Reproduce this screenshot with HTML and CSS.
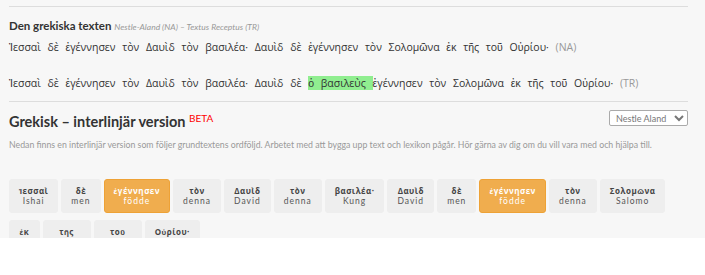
FILE: index.html
```html
<!DOCTYPE html>
<html lang="sv">
<head>
  <meta charset="UTF-8">
  <title>Grekiska texten</title>
  <link rel="stylesheet" href="styles.css">
</head>
<body>
  <div class="page">
    <hr class="sep first">

    <div class="greek-block">
      <h4 class="block-title">Den grekiska texten <small>Nestle-Aland (NA) – Textus Receptus (TR)</small></h4>
      <p class="greek-line">Ἰεσσαὶ δὲ ἐγέννησεν τὸν Δαυὶδ τὸν βασιλέα· Δαυὶδ δὲ ἐγέννησεν τὸν Σολομῶνα ἐκ τῆς τοῦ Οὐρίου· <span class="src">(NA)</span></p>
      <p class="greek-line">Ἰεσσαὶ δὲ ἐγέννησεν τὸν Δαυὶδ τὸν βασιλέα· Δαυὶδ δὲ <mark class="diff">ὁ βασιλεὺς </mark>ἐγέννησεν τὸν Σολομῶνα ἐκ τῆς τοῦ Οὐρίου· <span class="src">(TR)</span></p>
    </div>

    <hr class="sep">

    <div class="inter-head">
      <h2 class="inter-title">Grekisk – interlinjär version <sup class="beta">BETA</sup></h2>
      <select class="text-select">
        <option>Nestle Aland</option>
        <option>Textus Receptus</option>
      </select>
    </div>
    <p class="inter-desc">Nedan finns en interlinjär version som följer grundtextens ordföljd. Arbetet med att bygga upp text och lexikon pågår. Hör gärna av dig om du vill vara med och hjälpa till.</p>

    <div class="words">
      <div class="word"><span class="gr">Ἰεσσαὶ</span><span class="sv">Ishai</span></div>
      <div class="word"><span class="gr">δὲ</span><span class="sv">men</span></div>
      <div class="word active"><span class="gr">ἐγέννησεν</span><span class="sv">födde</span></div>
      <div class="word"><span class="gr">τὸν</span><span class="sv">denna</span></div>
      <div class="word"><span class="gr">Δαυὶδ</span><span class="sv">David</span></div>
      <div class="word"><span class="gr">τὸν</span><span class="sv">denna</span></div>
      <div class="word"><span class="gr">βασιλέα·</span><span class="sv">Kung</span></div>
      <div class="word"><span class="gr">Δαυὶδ</span><span class="sv">David</span></div>
      <div class="word"><span class="gr">δὲ</span><span class="sv">men</span></div>
      <div class="word active"><span class="gr">ἐγέννησεν</span><span class="sv">födde</span></div>
      <div class="word"><span class="gr">τὸν</span><span class="sv">denna</span></div>
      <div class="word"><span class="gr">Σολομῶνα</span><span class="sv">Salomo</span></div>
      <div class="word"><span class="gr">ἐκ</span><span class="sv">av</span></div>
      <div class="word"><span class="gr">τῆς</span><span class="sv">denna</span></div>
      <div class="word"><span class="gr">τοῦ</span><span class="sv">denne</span></div>
      <div class="word"><span class="gr">Οὐρίου·</span><span class="sv">Urias</span></div>
    </div>
  </div>
</body>
</html>
```

FILE: styles.css
```css
body {
  margin: 0;
  background: #fff;
  font-family: Lato, "Open Sans", sans-serif;
  color: #333;
}
.page {
  background: #f7f7f7;
  height: 238px;
  overflow: hidden;
  padding: 0 17px 0 9px;
}
.sep {
  border: 0;
  border-top: 1px solid #ddd;
  margin: 0;
}
.sep.first {
  margin-top: 6px;
}
.block-title {
  font-size: 11.5px;
  font-weight: 700;
  margin: 12px 0 0;
  line-height: 14px;
}
.block-title small {
  font-size: 8.5px;
  font-weight: 400;
  font-style: italic;
  color: #999;
}
.greek-line {
  font-family: "Open Sans", sans-serif;
  font-size: 10.5px;
  word-spacing: 4px;
  margin: 5px 0 0;
  line-height: 16px;
}
.greek-line + .greek-line {
  margin-top: 20px;
}
.src {
  color: #999;
}
.diff {
  background: #90ee90;
  color: inherit;
}
.greek-block {
  padding-bottom: 10px;
}
.inter-head {
  display: flex;
  justify-content: space-between;
  align-items: flex-start;
  margin-top: 3px;
}
.inter-title {
  font-size: 14.5px;
  font-weight: 700;
  margin: 3px 0 0;
  line-height: 20px;
}
.beta {
  color: #f00;
  font-size: 10px;
  font-weight: 400;
  vertical-align: 5px;
}
.text-select {
  font-family: Lato, sans-serif;
  font-size: 9px;
  color: #777;
  width: 79px;
  height: 16px;
  padding: 0 2px;
  margin-top: 5px;
  border: 1px solid #aaa;
  border-radius: 2px;
  background: #fff;
}
.inter-desc {
  font-size: 8.75px;
  color: #999;
  margin: 6px 0 0;
  line-height: 13px;
}
.words {
  display: flex;
  flex-wrap: wrap;
  gap: 7px 3px;
  margin-top: 28px;
}
.word {
  display: flex;
  flex-direction: column;
  align-items: center;
  background: #eee;
  border: 1px solid #eee;
  border-radius: 3px;
  padding: 5px 9px;
  min-height: 22px;
  font-size: 8.5px;
  letter-spacing: 1px;
  line-height: 11px;
}
.word .gr {
  font-family: "Open Sans", sans-serif;
  font-size: 8px;
  font-weight: 700;
  letter-spacing: 0.5px;
  color: #444;
}
.word .sv {
  color: #555;
}
.word.active {
  background: #f0ad4e;
  border-color: #eea236;
}
.word.active .gr,
.word.active .sv {
  color: #fff;
}
```
